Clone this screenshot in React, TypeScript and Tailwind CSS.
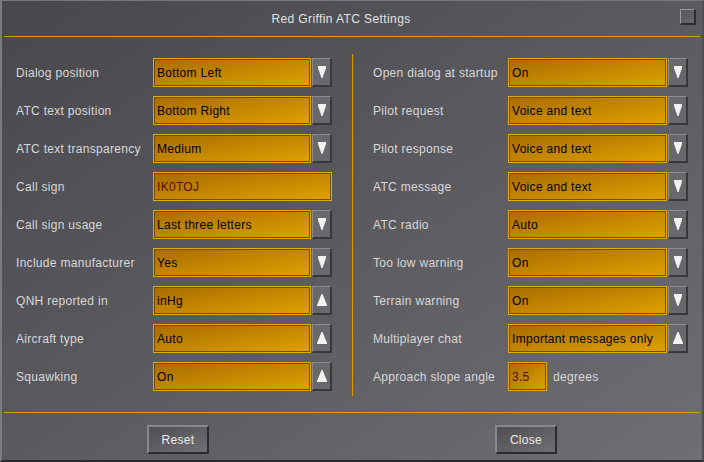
type Kind = "down" | "up" | "text" | "number"

type Row = {
  label: string
  value: string
  kind: Kind
  unit?: string
}

const leftRows: Row[] = [
  { label: "Dialog position", value: "Bottom Left", kind: "down" },
  { label: "ATC text position", value: "Bottom Right", kind: "down" },
  { label: "ATC text transparency", value: "Medium", kind: "down" },
  { label: "Call sign", value: "IK0TOJ", kind: "text" },
  { label: "Call sign usage", value: "Last three letters", kind: "down" },
  { label: "Include manufacturer", value: "Yes", kind: "down" },
  { label: "QNH reported in", value: "inHg", kind: "up" },
  { label: "Aircraft type", value: "Auto", kind: "up" },
  { label: "Squawking", value: "On", kind: "up" },
]

const rightRows: Row[] = [
  { label: "Open dialog at startup", value: "On", kind: "down" },
  { label: "Pilot request", value: "Voice and text", kind: "down" },
  { label: "Pilot response", value: "Voice and text", kind: "down" },
  { label: "ATC message", value: "Voice and text", kind: "down" },
  { label: "ATC radio", value: "Auto", kind: "down" },
  { label: "Too low warning", value: "On", kind: "down" },
  { label: "Terrain warning", value: "On", kind: "down" },
  { label: "Multiplayer chat", value: "Important messages only", kind: "up" },
  { label: "Approach slope angle", value: "3.5", kind: "number", unit: "degrees" },
]

const field =
  "h-[29px] flex items-center pl-[3px] border border-[#e8a800] shadow-[inset_0_0_0_1px_#6e4c00] bg-gradient-to-br from-[#a86c00] to-[#e0a200] text-[12px] whitespace-nowrap overflow-hidden"

function Arrow({ dir }: { dir: "down" | "up" }) {
  return (
    <div className="w-[20px] h-[29px] flex items-center justify-center bg-[#69686d] border-t border-l border-[#8c8b90] border-r-2 border-b-2 border-r-[#38373a] border-b-[#38373a]">
      {dir === "down" ? (
        <svg width="8" height="12" viewBox="0 0 8 12">
          <polygon points="0,0 8,0 8,2 4.5,12 3.5,12 0,2" fill="#f2f2f2" />
        </svg>
      ) : (
        <svg width="10" height="12" viewBox="0 0 10 12">
          <polygon points="4.5,0 5.5,0 10,11 10,12 0,12 0,11" fill="#f2f2f2" />
        </svg>
      )}
    </div>
  )
}

function Control({ row, boxW }: { row: Row; boxW: string }) {
  if (row.kind === "text") {
    return <div className={`${field} w-[179px] text-[#5a0c00]`}>{row.value}</div>
  }
  if (row.kind === "number") {
    return (
      <div className="flex items-center gap-[6px]">
        <div className={`${field} w-[39px] text-[#5a0c00]`}>{row.value}</div>
        <span className="text-[12px] text-[#d8d8d8]">{row.unit}</span>
      </div>
    )
  }
  return (
    <div className="flex gap-px">
      <div className={`${field} ${boxW} text-black`}>{row.value}</div>
      <Arrow dir={row.kind} />
    </div>
  )
}

function Column({ rows, labelW, boxW }: { rows: Row[]; labelW: string; boxW: string }) {
  return (
    <div className="flex flex-col gap-[9px] pt-1">
      {rows.map((row) => (
        <div key={row.label} className="flex items-center">
          <span className={`${labelW} text-[12px] text-[#d8d8d8] whitespace-nowrap`}>{row.label}</span>
          <Control row={row} boxW={boxW} />
        </div>
      ))}
    </div>
  )
}

function BevelButton({ label }: { label: string }) {
  return (
    <button className="w-[62px] h-[29px] flex items-center justify-center text-[12px] text-[#ececec] bg-gradient-to-br from-[#4f4e53] to-[#707074] border-t-2 border-l-2 border-[#88878c] border-r-2 border-b-2 border-r-[#2c2b2e] border-b-[#2c2b2e]">
      {label}
    </button>
  )
}

export default function App() {
  return (
    <div className="w-[704px] h-[462px] flex flex-col font-['Liberation_Sans',Arial,sans-serif] tracking-[0.3px] bg-gradient-to-br from-[#48474c] to-[#6f6e73] border-t border-t-[#78777c] border-l-2 border-l-[#7c7b80] border-r-2 border-r-[#505054] border-b-2 border-b-[#2a2a2c]">
      {/* title bar */}
      <div className="h-[35px] flex items-center">
        <div className="flex-1 text-center text-[12px] text-[#e2e2e2] pt-[1px] tracking-[0.4px]">Red Griffin ATC Settings</div>
        <div className="w-[16px] h-[16px] mr-[6px] mb-[3px] bg-gradient-to-br from-[#555459] to-[#6a696e] border-t border-l border-[#9a999e] border-r-2 border-b-2 border-r-[#2c2b2e] border-b-[#2c2b2e]" />
      </div>
      <div className="h-px mx-[2px] bg-[#dc9c00]" />

      {/* settings */}
      <div className="flex pt-[17px] pl-[14px]">
        <div className="w-[316px] pb-[5px]">
          <Column rows={leftRows} labelW="w-[137px]" boxW="w-[158px]" />
        </div>
        <div className="w-px mx-5 bg-[#dc9c00]" />
        <div className="w-[315px]">
          <Column rows={rightRows} labelW="w-[135px]" boxW="w-[159px]" />
        </div>
      </div>

      <div className="h-px mx-[2px] mt-4 bg-[#dc9c00]" />

      {/* buttons */}
      <div className="flex-1 grid grid-cols-2 justify-items-center pt-3 px-[2px]">
        <BevelButton label="Reset" />
        <BevelButton label="Close" />
      </div>
    </div>
  )
}
